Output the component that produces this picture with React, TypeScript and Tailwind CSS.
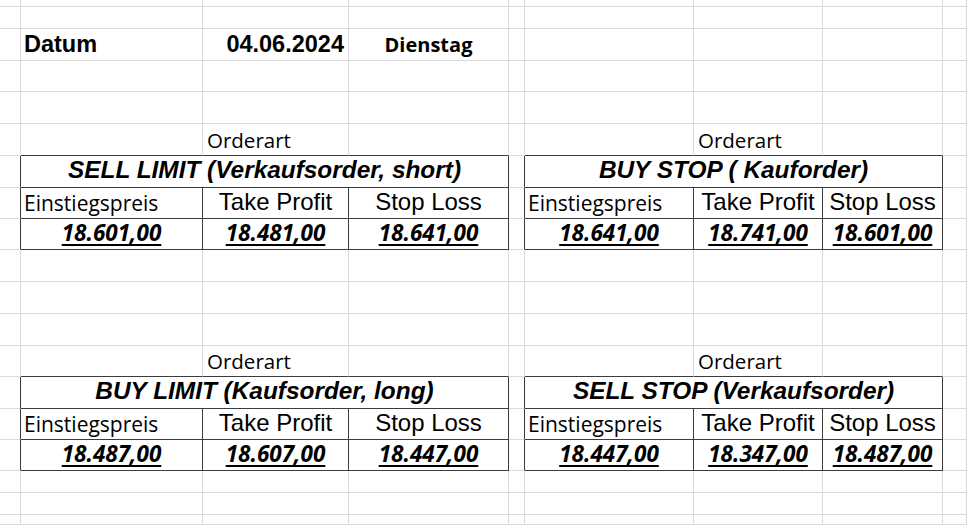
import React from "react";

type CellProps = {
  w: string;
  dr?: boolean;
  db?: boolean;
  className?: string;
  children?: React.ReactNode;
};

function Cell({ w, dr, db, className = "", children }: CellProps) {
  const rc = dr ? "border-r-[#3c3c3c]" : "border-r-[#dadada]";
  const bc = db ? "border-b-[#3c3c3c]" : "border-b-[#dadada]";
  return (
    <div
      className={`${w} h-full shrink-0 border-r border-b ${rc} ${bc} flex whitespace-nowrap overflow-visible text-black ${className}`}
    >
      {children}
    </div>
  );
}

const W = {
  A: "w-[21px]",
  B: "w-[182px]",
  C: "w-[146px]",
  D: "w-[160px]",
  E: "w-[16px]",
  F: "w-[169px]",
  G: "w-[129px]",
  H: "w-[120px]",
  I: "w-[24px]",
  BD: "w-[488px]",
  FH: "w-[418px]",
};

const arial = "font-['Liberation_Sans',Arial,sans-serif]";
const calibri = "font-['Open_Sans','Noto_Sans',sans-serif]";

function EmptyRow({ h }: { h: string }) {
  return (
    <div className={`flex ${h}`}>
      <Cell w={W.A} />
      <Cell w={W.B} />
      <Cell w={W.C} />
      <Cell w={W.D} />
      <Cell w={W.E} />
      <Cell w={W.F} />
      <Cell w={W.G} />
      <Cell w={W.H} />
      <Cell w={W.I} />
    </div>
  );
}

function OrderartRow({ h }: { h: string }) {
  const t = `${calibri} text-[20.5px] leading-none items-end pb-[5px] pl-[4px]`;
  return (
    <div className={`flex ${h}`}>
      <Cell w={W.A} />
      <Cell w={W.B} db />
      <Cell w={W.C} db className={t}>
        Orderart
      </Cell>
      <Cell w={W.D} db />
      <Cell w={W.E} />
      <Cell w={W.F} db />
      <Cell w={W.G} db className={t}>
        Orderart
      </Cell>
      <Cell w={W.H} db />
      <Cell w={W.I} />
    </div>
  );
}

type TableData = {
  title: string;
  values: [string, string, string];
};

function TitleRow({ left, right }: { left: string; right: string }) {
  const t = `${arial} font-bold italic text-[24.4px] leading-none items-end justify-center pb-[5px]`;
  return (
    <div className="flex h-[32px]">
      <Cell w={W.A} dr />
      <Cell w={W.BD} dr db className={t}>
        {left}
      </Cell>
      <Cell w={W.E} dr />
      <Cell w={W.FH} dr db className={t}>
        {right}
      </Cell>
      <Cell w={W.I} />
    </div>
  );
}

function HeaderRow() {
  const ein = `${calibri} text-[21px] leading-none items-end pb-[4px] pl-[3px]`;
  const ar = `${arial} text-[24px] leading-none items-end justify-center pb-[4px]`;
  return (
    <div className="flex h-[31px]">
      <Cell w={W.A} dr />
      <Cell w={W.B} dr db className={ein}>
        Einstiegspreis
      </Cell>
      <Cell w={W.C} dr db className={ar}>
        Take Profit
      </Cell>
      <Cell w={W.D} dr db className={ar}>
        Stop Loss
      </Cell>
      <Cell w={W.E} dr />
      <Cell w={W.F} dr db className={ein}>
        Einstiegspreis
      </Cell>
      <Cell w={W.G} dr db className={ar}>
        Take Profit
      </Cell>
      <Cell w={W.H} dr db className={ar}>
        Stop Loss
      </Cell>
      <Cell w={W.I} />
    </div>
  );
}

function ValueRow({ l, r }: { l: [string, string, string]; r: [string, string, string] }) {
  const v = `${calibri} font-bold italic text-[22.5px] leading-none items-end justify-center pb-[5px]`;
  const u = "underline decoration-[2px] underline-offset-[3px]";
  return (
    <div className="flex h-[31px]">
      <Cell w={W.A} dr />
      <Cell w={W.B} dr db className={v}>
        <span className={u}>{l[0]}</span>
      </Cell>
      <Cell w={W.C} dr db className={v}>
        <span className={u}>{l[1]}</span>
      </Cell>
      <Cell w={W.D} dr db className={v}>
        <span className={u}>{l[2]}</span>
      </Cell>
      <Cell w={W.E} dr />
      <Cell w={W.F} dr db className={v}>
        <span className={u}>{r[0]}</span>
      </Cell>
      <Cell w={W.G} dr db className={v}>
        <span className={u}>{r[1]}</span>
      </Cell>
      <Cell w={W.H} dr db className={v}>
        <span className={u}>{r[2]}</span>
      </Cell>
      <Cell w={W.I} />
    </div>
  );
}

function Block({ left, right }: { left: TableData; right: TableData }) {
  return (
    <>
      <TitleRow left={left.title} right={right.title} />
      <HeaderRow />
      <ValueRow l={left.values} r={right.values} />
    </>
  );
}

export default function App() {
  return (
    <div className="w-[967px] h-[526px] overflow-hidden bg-white flex flex-col">
      <EmptyRow h="h-[7px]" />
      <EmptyRow h="h-[22px]" />
      <div className="flex h-[32px]">
        <Cell w={W.A} />
        <Cell w={W.B} className={`${arial} font-bold text-[23.5px] leading-none items-end pb-[4px] pl-[3px]`}>
          Datum
        </Cell>
        <Cell w={W.C} className={`${arial} font-bold text-[23.5px] leading-none items-end justify-end pb-[4px] pr-[4px]`}>
          04.06.2024
        </Cell>
        <Cell w={W.D} className={`${calibri} font-bold text-[20px] leading-none items-end justify-center pb-[5px]`}>
          Dienstag
        </Cell>
        <Cell w={W.E} />
        <Cell w={W.F} />
        <Cell w={W.G} />
        <Cell w={W.H} />
        <Cell w={W.I} />
      </div>
      <EmptyRow h="h-[31px]" />
      <EmptyRow h="h-[32px]" />
      <OrderartRow h="h-[32px]" />
      <Block
        left={{ title: "SELL LIMIT (Verkaufsorder, short)", values: ["18.601,00", "18.481,00", "18.641,00"] }}
        right={{ title: "BUY STOP ( Kauforder)", values: ["18.641,00", "18.741,00", "18.601,00"] }}
      />
      <EmptyRow h="h-[32px]" />
      <EmptyRow h="h-[32px]" />
      <EmptyRow h="h-[32px]" />
      <OrderartRow h="h-[31px]" />
      <Block
        left={{ title: "BUY LIMIT (Kaufsorder, long)", values: ["18.487,00", "18.607,00", "18.447,00"] }}
        right={{ title: "SELL STOP (Verkaufsorder)", values: ["18.447,00", "18.347,00", "18.487,00"] }}
      />
      <EmptyRow h="h-[22px]" />
      <EmptyRow h="h-[22px]" />
      <EmptyRow h="h-[10px]" />
    </div>
  );
}
